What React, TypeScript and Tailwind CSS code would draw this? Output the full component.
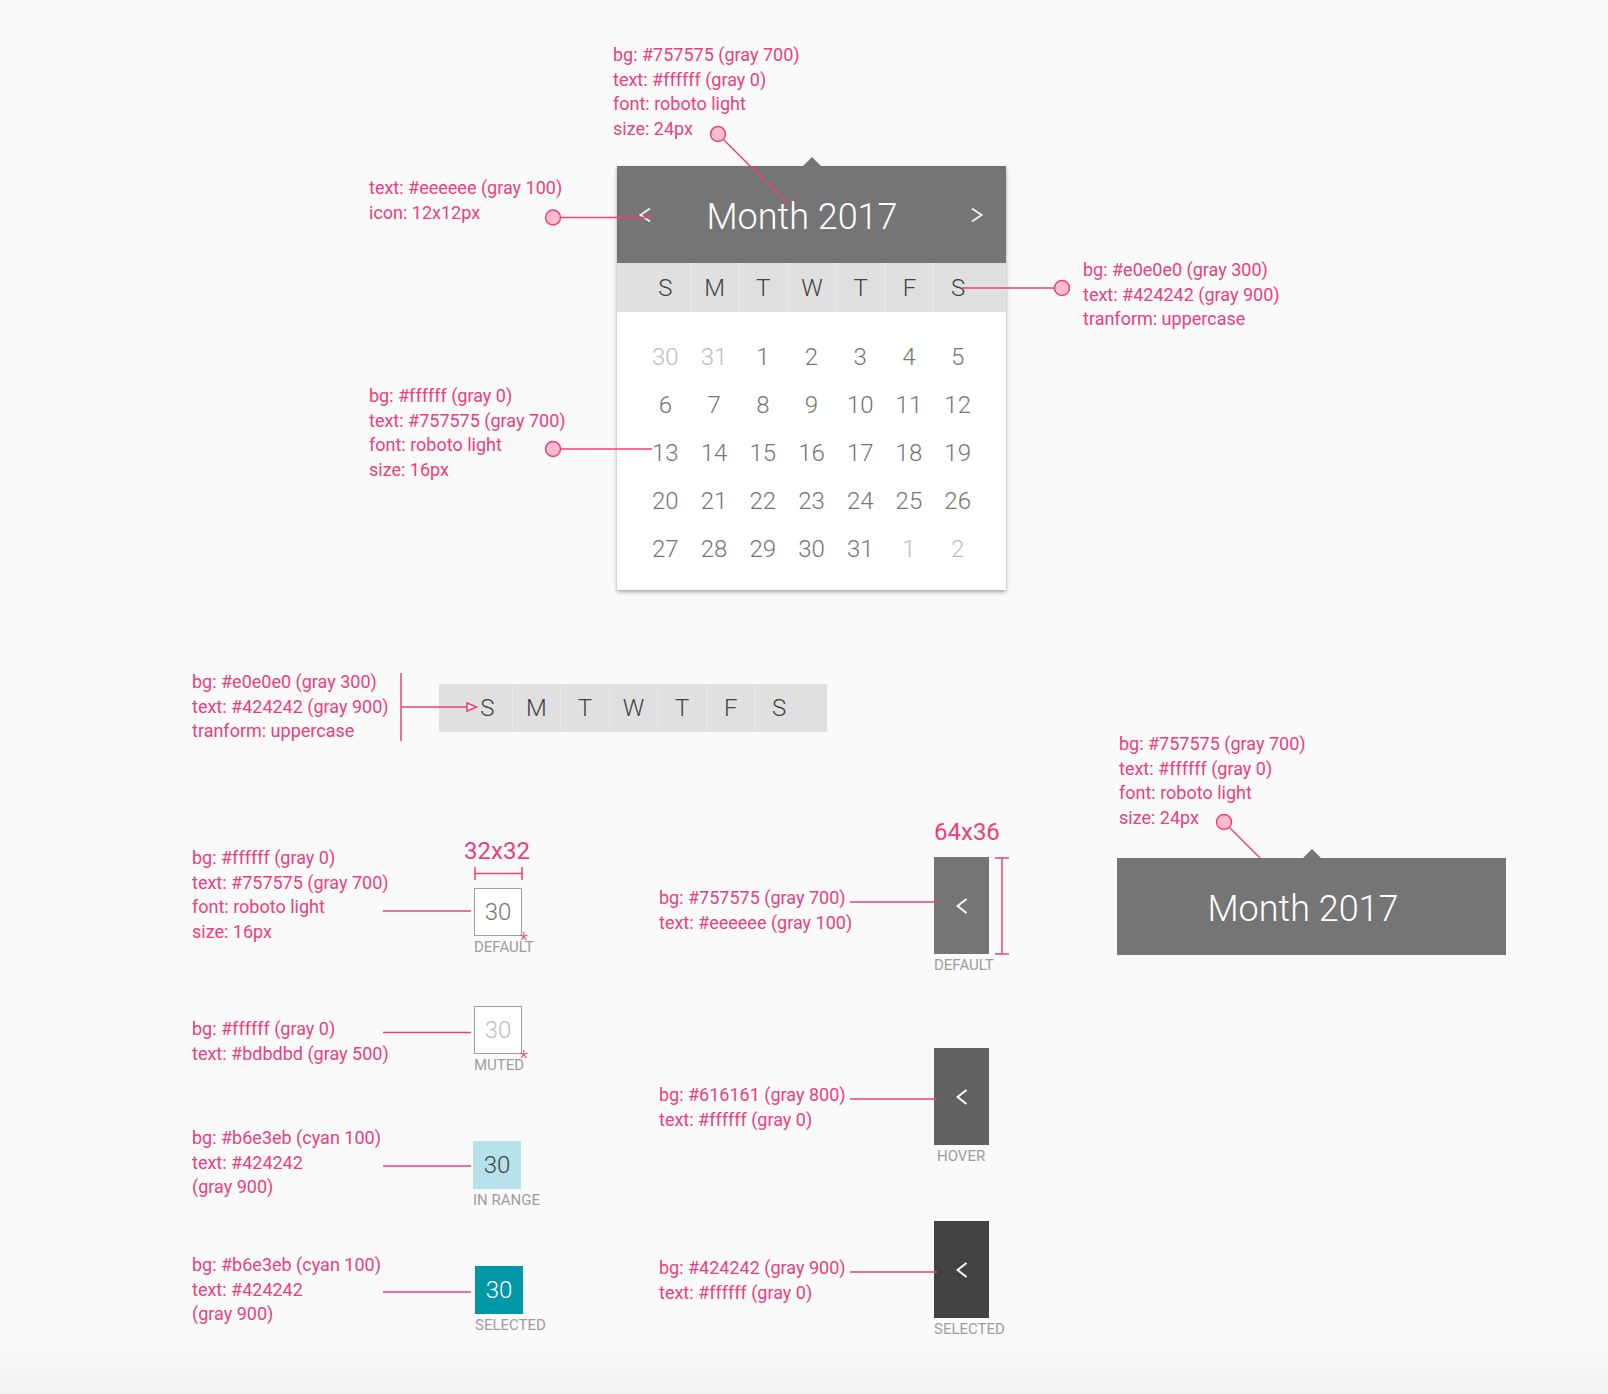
import React from 'react';

const WEEKDAYS = ['s', 'm', 't', 'w', 't', 'f', 's'];

type Day = { n: number; muted?: boolean };

const DAYS: Day[] = [
  { n: 30, muted: true },
  { n: 31, muted: true },
  ...Array.from({ length: 31 }, (_, i) => ({ n: i + 1 })),
  { n: 1, muted: true },
  { n: 2, muted: true },
];

function Note({ className, lines }: { className: string; lines: string[] }) {
  return (
    <div className={`absolute text-[18px] leading-[24.5px] text-[#ec407a] whitespace-nowrap ${className}`}>
      {lines.map((l, i) => (
        <div key={i}>{l}</div>
      ))}
    </div>
  );
}

function Chevron({ dir = 'left' }: { dir?: 'left' | 'right' }) {
  return (
    <svg width="14" height="16" viewBox="0 0 14 16">
      <polyline
        points={dir === 'left' ? '12,1.5 2.5,8 12,14.5' : '2,1.5 11.5,8 2,14.5'}
        fill="none"
        stroke="#eeeeee"
        strokeWidth="2"
      />
    </svg>
  );
}

function WeekdayBar({ className = '' }: { className?: string }) {
  return (
    <div className={`bg-[#e0e0e0] px-[24px] grid grid-cols-7 ${className}`}>
      {WEEKDAYS.map((d, i) => (
        <div
          key={i}
          className={`flex items-center justify-center uppercase text-[24px] font-light text-[#424242] ${
            i > 0 ? 'border-l border-[#e9e9e9]' : ''
          }`}
        >
          {d}
        </div>
      ))}
    </div>
  );
}

function Triangle() {
  return (
    <div className="flex justify-center">
      <div className="w-0 h-0 border-x-[9px] border-x-transparent border-b-[9px] border-b-[#757575]" />
    </div>
  );
}

function Calendar() {
  return (
    <div className="absolute left-[617px] top-[157px] w-[389px]">
      <Triangle />
      <div className="bg-white shadow-[0_2px_4px_rgba(0,0,0,0.35)]">
        <div className="h-[97px] bg-[#757575] flex items-center pl-[21px] pr-[22px]">
          <Chevron dir="left" />
          <div className="flex-1 pr-[18px] pt-[4px] text-center text-[36px] font-light text-white leading-none">
            Month 2017
          </div>
          <Chevron dir="right" />
        </div>
        <WeekdayBar className="h-[49px]" />
        <div className="px-[24px] pt-[21px] pb-[17px] grid grid-cols-7">
          {DAYS.map((d, i) => (
            <div
              key={i}
              className={`h-[48px] flex items-center justify-center text-[24px] font-light ${
                d.muted ? 'text-[#bdbdbd]' : 'text-[#757575]'
              }`}
            >
              {d.n}
            </div>
          ))}
        </div>
      </div>
    </div>
  );
}

function StateLabel({ children, className = '' }: { children: React.ReactNode; className?: string }) {
  return (
    <div className={`mt-[4px] text-[15px] leading-[14px] uppercase text-[#9e9e9e] whitespace-nowrap ${className}`}>
      {children}
    </div>
  );
}

function DayState({
  className,
  box,
  label,
  star,
}: {
  className: string;
  box: string;
  label: string;
  star?: boolean;
}) {
  return (
    <div className={`absolute ${className}`}>
      <div className={`relative w-[48px] h-[48px] flex items-center justify-center text-[24px] font-light ${box}`}>
        30
        {star && (
          <span className="absolute right-[-7px] top-[41px] text-[20px] leading-none text-[#ec407a]">*</span>
        )}
      </div>
      <StateLabel>{label}</StateLabel>
    </div>
  );
}

function NavState({ className, bg, label, labelClass = '' }: { className: string; bg: string; label: string; labelClass?: string }) {
  return (
    <div className={`absolute ${className}`}>
      <div className={`w-[55px] h-[97px] flex items-center justify-center ${bg}`}>
        <svg width="12" height="16" viewBox="0 0 12 16">
          <polyline points="10.5,1 1.5,8 10.5,15" fill="none" stroke="#ffffff" strokeWidth="2" />
        </svg>
      </div>
      <StateLabel className={labelClass}>{label}</StateLabel>
    </div>
  );
}

function Leaders() {
  const pink = '#ec407a';
  const dot = { fill: '#f8bbd0', stroke: pink, strokeWidth: 1.5 };
  return (
    <svg className="absolute left-0 top-0 pointer-events-none" width="1608" height="1394">
      <g stroke={pink} strokeWidth="1.5" fill="none">
        <line x1="718" y1="134" x2="789" y2="205" />
        <line x1="553" y1="217.5" x2="652" y2="217.5" />
        <line x1="962" y1="288" x2="1062" y2="288" />
        <line x1="553" y1="449" x2="652" y2="449" />
        <line x1="401" y1="673" x2="401" y2="741" />
        <line x1="401" y1="707" x2="467" y2="707" />
        <line x1="475" y1="873.5" x2="522" y2="873.5" />
        <line x1="475" y1="867" x2="475" y2="880" />
        <line x1="522" y1="867" x2="522" y2="880" />
        <line x1="383" y1="911" x2="471" y2="911" />
        <line x1="383" y1="1032.5" x2="471" y2="1032.5" />
        <line x1="383" y1="1166" x2="471" y2="1166" />
        <line x1="383" y1="1292" x2="471" y2="1292" />
        <line x1="850" y1="902" x2="937" y2="902" />
        <line x1="850" y1="1099" x2="937" y2="1099" />
        <line x1="850" y1="1272" x2="937" y2="1272" />
        <line x1="1002" y1="858" x2="1002" y2="954" />
        <line x1="995" y1="858" x2="1009" y2="858" />
        <line x1="995" y1="954" x2="1009" y2="954" />
        <line x1="1224" y1="822" x2="1260" y2="858" />
      </g>
      <polygon points="467,703 467,711 476.5,707" fill="#fafafa" stroke={pink} strokeWidth="1.5" />
      <circle cx="718" cy="134" r="7.5" {...dot} />
      <circle cx="553" cy="217.5" r="7.5" {...dot} />
      <circle cx="1062" cy="288" r="7.5" {...dot} />
      <circle cx="553" cy="449" r="7.5" {...dot} />
      <circle cx="1224" cy="822" r="7.5" {...dot} />
    </svg>
  );
}

export default function App() {
  return (
    <div
      className="relative w-[1608px] h-[1394px] overflow-hidden bg-[linear-gradient(to_bottom,#fafafa_96%,#f1f1f1)]"
      style={{ fontFamily: 'Roboto, "Liberation Sans", sans-serif' }}
    >
      <Note
        className="left-[613px] top-[43px]"
        lines={['bg: #757575 (gray 700)', 'text: #ffffff (gray 0)', 'font: roboto light', 'size: 24px']}
      />
      <Note className="left-[369px] top-[176px]" lines={['text: #eeeeee (gray 100)', 'icon: 12x12px']} />
      <Note
        className="left-[1083px] top-[258px]"
        lines={['bg: #e0e0e0 (gray 300)', 'text: #424242 (gray 900)', 'tranform: uppercase']}
      />
      <Note
        className="left-[369px] top-[384px]"
        lines={['bg: #ffffff (gray 0)', 'text: #757575 (gray 700)', 'font: roboto light', 'size: 16px']}
      />

      <Calendar />

      <Note
        className="left-[192px] top-[670px]"
        lines={['bg: #e0e0e0 (gray 300)', 'text: #424242 (gray 900)', 'tranform: uppercase']}
      />
      <WeekdayBar className="absolute left-[439px] top-[684px] w-[388px] h-[48px]" />

      <Note
        className="left-[192px] top-[846px]"
        lines={['bg: #ffffff (gray 0)', 'text: #757575 (gray 700)', 'font: roboto light', 'size: 16px']}
      />
      <div className="absolute left-[462px] top-[838px] w-[70px] text-center text-[24px] leading-[26px] text-[#ec407a]">
        32x32
      </div>
      <DayState
        className="left-[474px] top-[888px]"
        box="bg-white border border-[#a0a0a0] text-[#757575]"
        label="Default"
        star
      />

      <Note className="left-[192px] top-[1017px]" lines={['bg: #ffffff (gray 0)', 'text: #bdbdbd (gray 500)']} />
      <DayState
        className="left-[474px] top-[1006px]"
        box="bg-white border border-[#a0a0a0] text-[#bdbdbd]"
        label="Muted"
        star
      />

      <Note className="left-[192px] top-[1126px]" lines={['bg: #b6e3eb (cyan 100)', 'text: #424242', '(gray 900)']} />
      <DayState className="left-[473px] top-[1141px]" box="bg-[#b6e3eb] text-[#424242]" label="In range" />

      <Note className="left-[192px] top-[1253px]" lines={['bg: #b6e3eb (cyan 100)', 'text: #424242', '(gray 900)']} />
      <DayState className="left-[475px] top-[1266px]" box="bg-[#0097a7] text-white" label="Selected" />

      <div className="absolute left-[934px] top-[819px] text-[24px] leading-[26px] text-[#ec407a]">64x36</div>
      <Note className="left-[659px] top-[886px]" lines={['bg: #757575 (gray 700)', 'text: #eeeeee (gray 100)']} />
      <NavState className="left-[934px] top-[857px]" bg="bg-[#757575]" label="Default" />

      <Note className="left-[659px] top-[1083px]" lines={['bg: #616161 (gray 800)', 'text: #ffffff (gray 0)']} />
      <NavState className="left-[934px] top-[1048px]" bg="bg-[#616161]" label="Hover" labelClass="ml-[3px]" />

      <Note className="left-[659px] top-[1256px]" lines={['bg: #424242 (gray 900)', 'text: #ffffff (gray 0)']} />
      <NavState className="left-[934px] top-[1221px]" bg="bg-[#424242]" label="Selected" />

      <Note
        className="left-[1119px] top-[732px]"
        lines={['bg: #757575 (gray 700)', 'text: #ffffff (gray 0)', 'font: roboto light', 'size: 24px']}
      />
      <div className="absolute left-[1117px] top-[849px] w-[389px]">
        <Triangle />
        <div className="h-[97px] bg-[#757575] flex items-center justify-center pr-[17px] pt-[4px] text-[36px] font-light text-white leading-none">
          Month 2017
        </div>
      </div>

      <Leaders />
    </div>
  );
}
